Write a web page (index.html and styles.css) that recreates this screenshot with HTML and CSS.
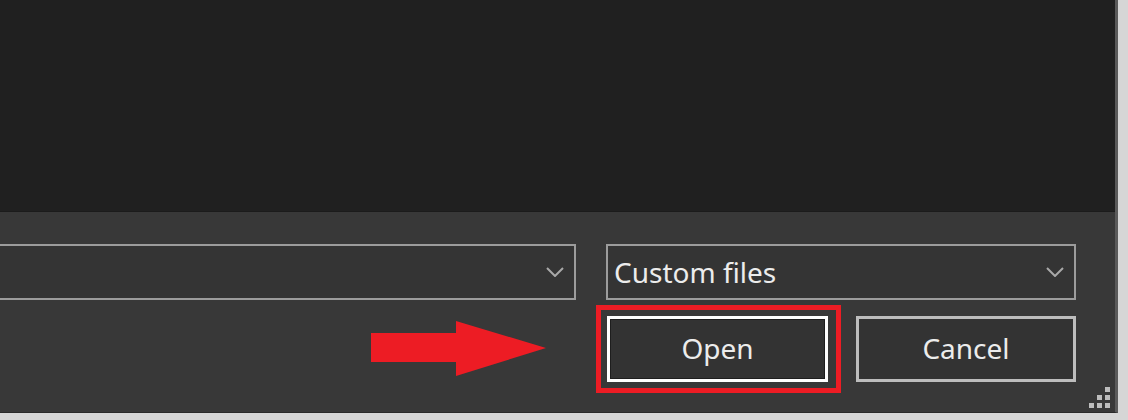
FILE: index.html
```html
<!DOCTYPE html>
<html lang="en">
<head>
    <meta charset="UTF-8">
    <meta name="viewport" content="width=device-width, initial-scale=1.0">
    <title>Open file</title>
    <link rel="stylesheet" href="styles.css">
</head>
<body>
    <div class="window">
        <div class="file-list"></div>

        <div class="footer">
            <div class="footer-row">
                <div class="select select-name">
                    <span class="select-text"></span>
                    <svg class="chevron" width="18" height="10" viewBox="0 0 18 10"><polyline points="1,1 9,9 17,1"/></svg>
                </div>
                <div class="select select-type">
                    <span class="select-text">Custom files</span>
                    <svg class="chevron" width="18" height="10" viewBox="0 0 18 10"><polyline points="1,1 9,9 17,1"/></svg>
                </div>
            </div>

            <div class="footer-row footer-actions">
                <!-- pointer toward the Open button -->
                <svg class="arrow" width="176" height="56" viewBox="0 0 176 56">
                    <polygon points="0,12 85,12 85,0 175,27 85,55 85,41 0,41"/>
                </svg>
                <div class="highlight">
                    <button class="btn btn-focus">Open</button>
                </div>
                <button class="btn">Cancel</button>
            </div>

            <div class="grip">
                <span></span><span></span><span></span>
                <span></span><span></span><span></span>
                <span></span><span></span><span></span>
            </div>
        </div>
    </div>
</body>
</html>
```

FILE: styles.css
```css
body {
    margin: 0;
    background: #d6d6d6;
    font-family: 'Noto Sans', 'Open Sans', sans-serif;
    overflow: hidden;
}

.window {
    width: 1115px;
    height: 412px;
    display: flex;
    flex-direction: column;
    border-right: 3px solid #5a5a5a;
    border-bottom: 1px solid #2a2a2a;
    box-sizing: content-box;
}

.file-list {
    height: 211px;
    background: #202020;
    border-bottom: 1px solid #1b1b1b;
}

.footer {
    flex: 1;
    background: #383838;
    padding: 32px 39px 0 0;
    display: flex;
    flex-direction: column;
    position: relative;
}

.footer-row {
    display: flex;
    align-items: center;
    justify-content: flex-end;
}

.select {
    height: 56px;
    border: 2px solid #9c9c9c;
    background: #343434;
    box-sizing: border-box;
    display: flex;
    align-items: center;
    justify-content: space-between;
    padding: 0 10px 0 6px;
}

.select-name {
    width: 580px;
    margin-left: -4px;
    margin-right: 30px;
}

.select-type {
    width: 470px;
}

.select-text {
    color: #ececec;
    font-size: 28px;
    line-height: 1;
    padding-bottom: 1px;
}

.chevron polyline {
    fill: none;
    stroke: #a8a8a8;
    stroke-width: 2;
}

.footer-actions {
    margin-top: 5px;
}

.arrow {
    margin-right: 49px;
}

.arrow polygon {
    fill: #ed1c24;
}

.highlight {
    border: 5px solid #ed1c24;
    padding: 6px 8px 6px 6px;
    margin-right: 15px;
}

.btn {
    width: 220px;
    height: 66px;
    background: #333333;
    color: #ececec;
    border: 3px solid #bdbdbd;
    font-family: inherit;
    font-size: 28px;
    line-height: 1;
    padding: 0 0 2px 0;
    display: block;
}

.btn-focus {
    width: 221px;
    border-color: #ffffff;
    box-shadow: inset 0 0 0 1px #1e1e1e;
}

/* resize handle in the corner */
.grip {
    position: absolute;
    right: 5px;
    bottom: 4px;
    display: grid;
    grid-template-columns: repeat(3, 5px);
    grid-template-rows: repeat(3, 5px);
    gap: 3px;
}

.grip span {
    background: #bdbdbd;
}

.grip span:nth-child(1),
.grip span:nth-child(2),
.grip span:nth-child(4) {
    background: transparent;
}
```
